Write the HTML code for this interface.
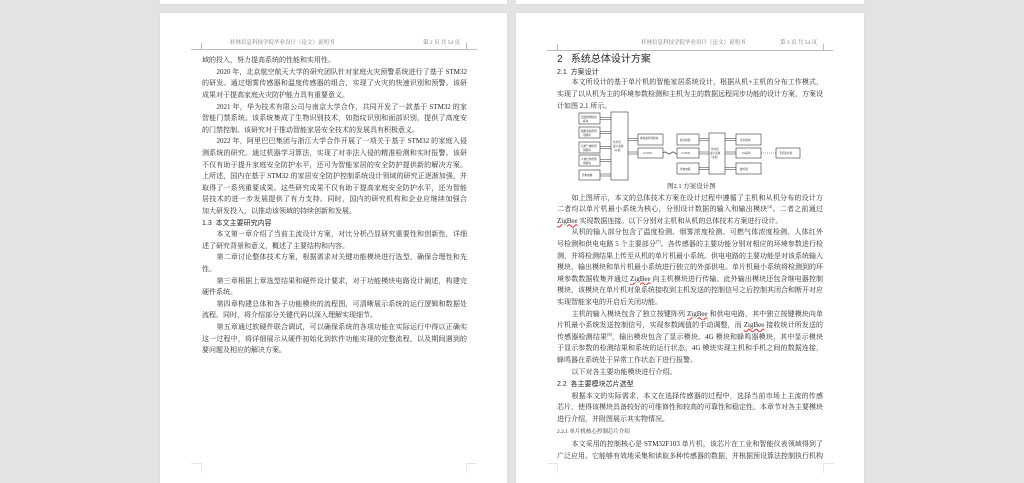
<!DOCTYPE html>
<html><head><meta charset="utf-8">
<style>
*{margin:0;padding:0;box-sizing:border-box}
html,body{width:1024px;height:483px;overflow:hidden;background:#e3e3e3;position:relative;font-family:"Liberation Serif","Noto Serif CJK SC",serif;color:#2a2a2a}
.pg{position:absolute;background:#fff;box-shadow:0 0 1px #c8c8c8}
.l{position:absolute;font-size:7px;line-height:11.6px;height:11.6px;white-space:nowrap;overflow:visible}
.j{text-align:justify;text-align-last:justify;white-space:normal;overflow:hidden}
.i{padding-left:14.5px}
sup{font-size:4px;line-height:0;vertical-align:3px}
.hd{position:absolute;font-size:5.5px;color:#777;line-height:7px;white-space:nowrap}
.hr{position:absolute;height:1px;background:#bbb}
.tk{position:absolute;width:1px;background:#bbb}
.mk{position:absolute;background:#e6e6e6}
.z{text-decoration:underline wavy #d33;text-decoration-thickness:0.6px}
.b{font-family:"Liberation Sans","Noto Sans CJK SC",sans-serif}
</style></head><body>
<div class="pg" style="left:160px;top:0;width:347px;height:4px"></div>
<div class="pg" style="left:516px;top:0;width:348px;height:4px"></div>
<div class="pg" style="left:160px;top:13px;width:347px;height:480px"></div>
<div class="pg" style="left:516px;top:13px;width:348px;height:480px"></div>

<div class="hd" style="left:230px;top:40px">桂林信息科技学院毕业设计（论文）说明书</div>
<div class="hd" style="left:423px;top:40px">第 2 页 共 54 页</div>
<div class="hr" style="left:191px;top:49px;width:286px"></div>
<div class="tk" style="left:201px;top:43px;height:6px"></div>
<div class="tk" style="left:466px;top:43px;height:6px"></div>
<div class="mk" style="left:191px;top:463px;width:10px;height:1px"></div>
<div class="mk" style="left:201px;top:463px;width:1px;height:10px"></div>
<div class="mk" style="left:466px;top:463px;width:11px;height:1px"></div>
<div class="mk" style="left:466px;top:463px;width:1px;height:10px"></div>

<div class="hd" style="left:641px;top:40px">桂林信息科技学院毕业设计（论文）说明书</div>
<div class="hd" style="left:780px;top:40px">第 3 页 共 54 页</div>
<div class="hr" style="left:547px;top:50px;width:286px"></div>
<div class="tk" style="left:557px;top:44px;height:6px"></div>
<div class="tk" style="left:823px;top:44px;height:6px"></div>
<div class="mk" style="left:547px;top:463px;width:10px;height:1px"></div>
<div class="mk" style="left:557px;top:463px;width:1px;height:10px"></div>
<div class="mk" style="left:823px;top:463px;width:11px;height:1px"></div>
<div class="mk" style="left:823px;top:463px;width:1px;height:10px"></div>

<div style="position:absolute;left:202px;top:0;width:265px">
<div class="l" style="top:55.2px">域的投入，努力提高系统的性能和实用性。</div>
<div class="l j i" style="top:66.8px;width:265px">2020 年，北京航空航天大学的研究团队针对家庭火灾预警系统进行了基于 STM32</div>
<div class="l j" style="top:78.4px;width:265px">的研发。通过烟雾传感器和温度传感器的组合，实现了火灾的快速识别和预警。该研究</div>
<div class="l" style="top:90px">成果对于提高家庭火灾防护能力具有重要意义。</div>
<div class="l j i" style="top:101.6px;width:265px">2021 年，华为技术有限公司与南京大学合作，共同开发了一款基于 STM32 的家庭</div>
<div class="l j" style="top:113.2px;width:265px">智能门禁系统。该系统集成了生物识别技术，如指纹识别和面部识别，提供了高度安全</div>
<div class="l" style="top:124.8px">的门禁控制。该研究对于推动智能家居安全技术的发展具有积极意义。</div>
<div class="l j i" style="top:136.4px;width:265px">2022 年，阿里巴巴集团与浙江大学合作开展了一项关于基于 STM32 的家庭入侵检</div>
<div class="l j" style="top:148px;width:265px">测系统的研究。通过机器学习算法，实现了对非法入侵的精准检测和实时报警。该研究</div>
<div class="l j" style="top:159.6px;width:265px">不仅有助于提升家庭安全防护水平，还可为智能家居的安全防护提供新的解决方案。综</div>
<div class="l j" style="top:171.2px;width:265px">上所述，国内在基于 STM32 的家居安全防护控制系统设计领域的研究正逐渐加强，并</div>
<div class="l j" style="top:182.8px;width:265px">取得了一系列重要成果。这些研究成果不仅有助于提高家庭安全防护水平，还为智能家</div>
<div class="l j" style="top:194.4px;width:265px">居技术的进一步发展提供了有力支持。同时，国内的研究机构和企业应继续加强合作，</div>
<div class="l" style="top:206px">加大研发投入，以推动该领域的持续创新和发展。</div>
<div class="l b" style="top:217.6px;font-size:7px">1.3&nbsp; 本文主要研究内容</div>
<div class="l j i" style="top:229.2px;width:265px">本文第一章介绍了当前主流设计方案，对比分析凸显研究重要性和创新性，详细阐</div>
<div class="l" style="top:240.8px">述了研究背景和意义，概述了主要结构和内容。</div>
<div class="l j i" style="top:252.4px;width:265px">第二章讨论整体技术方案，根据需求对关键功能模块进行选型，确保合理性和先进</div>
<div class="l" style="top:264px">性。</div>
<div class="l j i" style="top:275.6px;width:265px">第三章根据上章选型结果和硬件设计要求，对于功能模块电路设计阐述，构建完整</div>
<div class="l" style="top:287.2px">硬件系统。</div>
<div class="l j i" style="top:298.8px;width:265px">第四章构建总体和各子功能模块的流程图，可清晰展示系统的运行逻辑和数据处理</div>
<div class="l" style="top:310.4px">流程。同时，将介绍部分关键代码以深入理解实现细节。</div>
<div class="l j i" style="top:322px;width:265px">第五章通过软硬件联合调试，可以确保系统的各项功能在实际运行中得以正确实现。</div>
<div class="l j" style="top:333.6px;width:265px">这一过程中，将详细展示从硬件初始化到软件功能实现的完整流程，以及期间遇到的主</div>
<div class="l" style="top:345.2px">要问题及相应的解决方案。</div>
</div>

<div style="position:absolute;left:557px;top:0;width:266px">
<div class="l b" style="top:54px;font-size:10px;line-height:12px">2&nbsp;&nbsp; 系统总体设计方案</div>
<div class="l b" style="top:66.5px;font-size:7px">2.1&nbsp; 方案设计</div>
<div class="l j i" style="top:76.5px;width:266px">本文所设计的基于单片机的智能家居系统设计，根据从机+主机的分布工作模式，</div>
<div class="l j" style="top:89px;width:266px">实现了以从机为主的环境参数检测和主机为主的数据远程同步功能的设计方案，方案设</div>
<div class="l" style="top:101px">计如图 2.1 所示。</div>
<div class="l" style="top:180.5px;left:110px;font-size:6.5px">图2.1 方案设计图</div>
<div class="l j i" style="top:192.5px;width:266px">如上图所示，本文的总体技术方案在设计过程中遵循了主机和从机分布的设计方案，</div>
<div class="l j" style="top:204.1px;width:266px">二者均以单片机最小系统为核心，分别设计数据的输入和输出模块<sup>[4]</sup>。二者之前通过</div>
<div class="l" style="top:215.7px"><span class="z">ZigBee</span> 实现数据连接。以下分别对主机和从机的总体技术方案进行设计。</div>
<div class="l j i" style="top:227.3px;width:266px">从机的输入部分包含了温度检测、烟雾浓度检测、可燃气体浓度检测、人体红外信</div>
<div class="l j" style="top:238.9px;width:266px">号检测和供电电路 5 个主要部分<sup>[7]</sup>。各传感器的主要功能分别对相应的环境参数进行检</div>
<div class="l j" style="top:250.5px;width:266px">测，并将检测结果上传至从机的单片机最小系统。供电电路的主要功能是对该系统输入</div>
<div class="l j" style="top:262.1px;width:266px">模块、输出模块和单片机最小系统进行独立的外部供电。单片机最小系统将检测到的环</div>
<div class="l j" style="top:273.7px;width:266px">境参数数据收集并通过 <span class="z">ZigBee</span> 向主机模块进行传输。此外输出模块还包含继电器控制</div>
<div class="l j" style="top:285.3px;width:266px">模块，该模块在单片机对象系统接收到主机发送的控制信号之后控制其闭合和断开对应</div>
<div class="l" style="top:296.9px">实现智能家电的开启后关闭功能。</div>
<div class="l j i" style="top:308.5px;width:266px">主机的输入模块包含了独立按键阵列 <span class="z">ZigBee</span> 和供电电路，其中独立按键模块向单</div>
<div class="l j" style="top:320.1px;width:266px">片机最小系统发送控制信号，实现参数阈值的手动调整，而 <span class="z">ZigBee</span> 接收统计所发送的</div>
<div class="l j" style="top:331.7px;width:266px">传感器检测结果<sup>[8]</sup>，输出模块包含了显示模块、4G 模块和蜂鸣器模块，其中显示模块用</div>
<div class="l j" style="top:343.3px;width:266px">于显示参数的检测结果和系统的运行状态，4G 模块实现主机和手机之间的数据连接，</div>
<div class="l" style="top:354.9px">蜂鸣器在系统处于异常工作状态下进行报警。</div>
<div class="l i" style="top:366.5px">以下对各主要功能模块进行介绍。</div>
<div class="l b" style="top:378.5px;font-size:7px">2.2&nbsp; 各主要模块芯片选型</div>
<div class="l j i" style="top:390.7px;width:266px">根据本文的实际需求，本文在选择传感器的过程中，选择当前市场上主流的传感器</div>
<div class="l j" style="top:402.3px;width:266px">芯片，使得该模块具备较好的可维修性和较高的可靠性和稳定性。本章节对各主要模块</div>
<div class="l" style="top:413.9px">进行介绍，并附图展示其实物情况。</div>
<div class="l" style="top:427px;font-size:5.5px">2.2.1 单片机核心控制芯片介绍</div>
<div class="l j i" style="top:439px;width:266px">本文采用的控制核心是 STM32F103 单片机，该芯片在工业和智能仪表领域得到了</div>
<div class="l j" style="top:450.6px;width:266px">广泛应用。它能够有效地采集和读取多种传感器的数据，并根据预设算法控制执行机构</div>
</div>

<svg style="position:absolute;left:0;top:0" width="1024" height="483">
<g fill="none" stroke="#333" stroke-width="0.6">
<rect x="579" y="113" width="21" height="11"/>
<rect x="579" y="127" width="21" height="11"/>
<rect x="579" y="142" width="21" height="11"/>
<rect x="579" y="155" width="21" height="11"/>
<rect x="579" y="170" width="21" height="10"/>
<rect x="611" y="112" width="17" height="68"/>
<rect x="638" y="134" width="25" height="11"/>
<rect x="638" y="148" width="25" height="10"/>
<rect x="677" y="134" width="22" height="11"/>
<rect x="677" y="148" width="22" height="10"/>
<rect x="677" y="163" width="22" height="11"/>
<rect x="709" y="133" width="16" height="41"/>
<rect x="736" y="134" width="25" height="11"/>
<rect x="736" y="148" width="25" height="10"/>
<rect x="736" y="163" width="25" height="11"/>
<rect x="776" y="148" width="24" height="10"/>
<path d="M600 117.5H611M600 119.5H611M600 131.5H611M600 133.5H611M600 146.5H611M600 148.5H611M600 159.5H611M600 161.5H611M600 174H611M600 176H611"/>
<path d="M628 138.5H638M628 140.5H638M628 152H638M628 154H638"/>
<path d="M663 153Q665 151 667 153T671 153T675 153T677 153" />
<path d="M699 138.5H709M699 140.5H709M699 152H709M699 154H709M699 167.5H709M699 169.5H709"/>
<path d="M725 138.5H736M725 140.5H736M725 152H736M725 154H736M725 167.5H736M725 169.5H736"/>
<path d="M761 153H776" stroke-dasharray="1 1"/>
</g>
<g font-size="2.6" fill="#444" font-family="Noto Sans CJK SC,sans-serif">
<text x="581" y="118">温度检测模块</text><text x="583" y="122">模块</text>
<text x="581" y="132">烟雾浓度检测</text><text x="583" y="136">测模块</text>
<text x="581" y="147">可燃气体检测</text><text x="583" y="151">测模块</text>
<text x="581" y="160">人体红外检测</text><text x="583" y="164">测模块</text>
<text x="582" y="176">供电电路</text>
<text x="613" y="143">单片机</text><text x="613" y="147">最小系统</text><text x="614" y="151">(从机)</text>
<text x="640" y="139">继电器控制模块</text>
<text x="643" y="154">CC2530</text>
<text x="680" y="141">独立按键</text>
<text x="681" y="154">CC2530</text>
<text x="680" y="170">供电电路</text>
<text x="711" y="150">单片机</text><text x="710" y="154">最小系统</text><text x="711" y="158">(主机)</text>
<text x="740" y="141">显示模块</text>
<text x="742" y="154">4G模块</text>
<text x="740" y="170">蜂鸣器</text>
<text x="779" y="154">手机客户端</text>
</g>
</svg>
</body></html>
